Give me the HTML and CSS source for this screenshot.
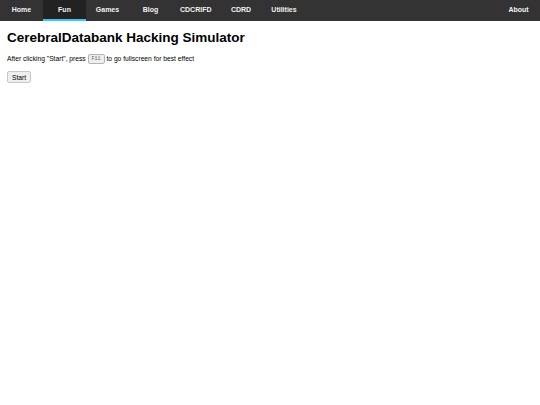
FILE: index.html
```html
<!DOCTYPE html>
<html lang="en">
<head>
  <meta charset="UTF-8">
  <title>CerebralDatabank Hacking Simulator</title>
  <link rel="stylesheet" href="styles.css">
</head>
<body>
  <!-- Top navigation -->
  <nav class="topnav">
    <a href="#">Home</a>
    <a href="#" class="active">Fun</a>
    <a href="#">Games</a>
    <a href="#">Blog</a>
    <a href="#">CDCRIFD</a>
    <a href="#">CDRD</a>
    <a href="#">Utilities</a>
    <a href="#" class="right">About</a>
  </nav>

  <main class="content">
    <h1>CerebralDatabank Hacking Simulator</h1>
    <p>After clicking "Start", press <kbd>F11</kbd> to go fullscreen for best effect</p>
    <button id="start">Start</button>
  </main>
</body>
</html>
```

FILE: styles.css
```css
/* General Styles */
body {
  margin: 0;
  font-family: 'Liberation Sans', Arial, sans-serif;
  background: #fff;
  color: #000;
}

/* Navigation bar */
.topnav {
  display: flex;
  background-color: #333;
  height: 21px;
}

.topnav a {
  min-width: 43px;
  box-sizing: border-box;
  padding: 0 8px;
  color: #f2f2f2;
  font-size: 7px;
  font-weight: bold;
  text-align: center;
  text-decoration: none;
  line-height: 20px;
}

.topnav a.active {
  background-color: #222;
  border-bottom: 2px solid #3cc7e8;
  line-height: 19px;
}

.topnav a.right {
  margin-left: auto;
}

/* Page content */
.content {
  padding: 0 7px;
}

.content h1 {
  font-size: 13.5px;
  line-height: 16px;
  margin: 9px 0 7px;
}

.content p {
  font-size: 6.7px;
  line-height: 11px;
  margin: 0 0 7px;
}

kbd {
  display: inline-block;
  vertical-align: middle;
  box-sizing: border-box;
  height: 10px;
  font-family: 'Liberation Mono', monospace;
  font-size: 5px;
  line-height: 8px;
  padding: 0 3px;
  background: #eee;
  border: 1px solid #b4b4b4;
  border-radius: 2px;
  color: #666;
}

#start {
  display: block;
  font-family: 'Liberation Sans', Arial, sans-serif;
  font-size: 6.7px;
  height: 12px;
  padding: 0 4px;
  background: #efefef;
  border: 1px solid #c8c8c8;
  border-radius: 2px;
  color: #000;
}
```
